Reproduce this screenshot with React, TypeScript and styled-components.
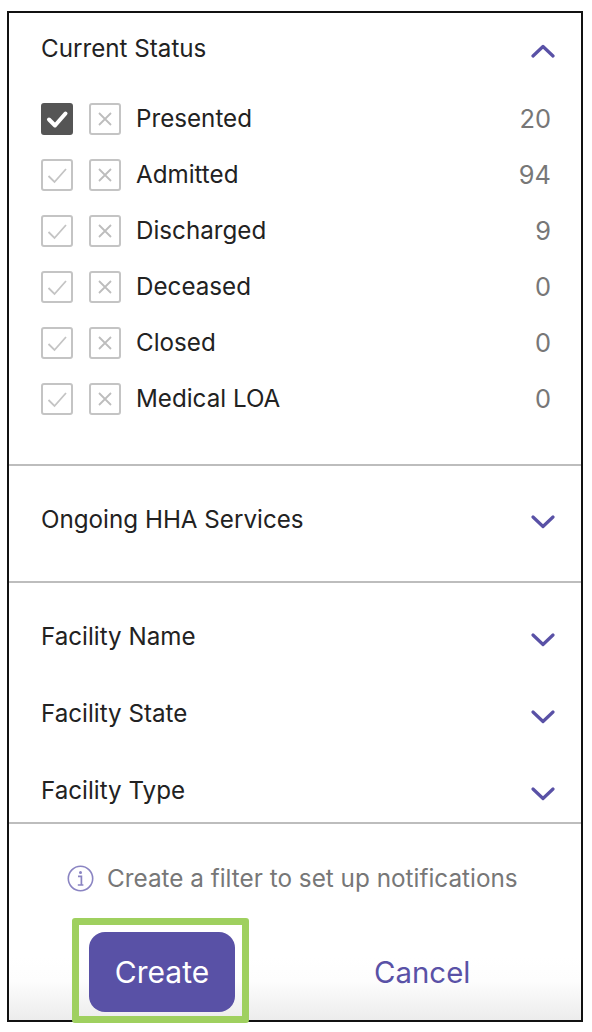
import React from "react";
import styled, { createGlobalStyle } from "styled-components";

const Global = createGlobalStyle`
  html, body { margin: 0; padding: 0; background: #fff; }
  body { font-family: Inter, "Liberation Sans", sans-serif; }
  * { box-sizing: border-box; }
`;

const Page = styled.div`
  width: 592px;
  height: 1032px;
  padding: 11px 9px 10px 7px;
  background: #fff;
`;

const Panel = styled.div`
  height: 100%;
  border: 2px solid #111;
  display: flex;
  flex-direction: column;
  background: #fff;
`;

const Section = styled.section<{ $h: number }>`
  height: ${(p) => p.$h}px;
  border-bottom: 2px solid #bdbdbd;
  flex: none;
`;

const StackedSection = styled(Section)`
  padding-top: 35px;
  display: flex;
  flex-direction: column;
  gap: 39px;
`;

const HeadRow = styled.div<{ $h: number }>`
  height: ${(p) => p.$h}px;
  padding: 0 26px 0 32px;
  display: flex;
  align-items: center;
  justify-content: space-between;
`;

const Title = styled.div`
  font-size: 24.2px;
  line-height: 28px;
  color: #222;
`;

const Rows = styled.div`
  padding: 6px 30px 0 32px;
  display: flex;
  flex-direction: column;
`;

const Row = styled.div`
  height: 56px;
  display: flex;
  align-items: center;
`;

const Box = styled.span<{ $on?: boolean }>`
  width: 32px;
  height: 32px;
  margin-right: 16px;
  flex: none;
  border-radius: 3px;
  border: 2px solid ${(p) => (p.$on ? "#555" : "#c4c4c4")};
  background: ${(p) => (p.$on ? "#555" : "#fff")};
  display: flex;
  align-items: center;
  justify-content: center;
`;

const Label = styled.span`
  flex: 1;
  margin: -2px 0 0 -1px;
  font-size: 24.2px;
  color: #222;
`;

const Count = styled.span`
  margin-top: -2px;
  font-size: 25.4px;
  color: #777;
`;

const ChevronSvg = styled.svg`
  margin-top: 4px;
  flex: none;
  ${StackedSection} & {
    margin-top: 6px;
  }
`;

const Footer = styled.div`
  flex: 1;
  display: flex;
  flex-direction: column;
  background: linear-gradient(to bottom, #fff 0, #fff 68%, #fdfdfd 80%, #ececec 100%);
`;

const Note = styled.div`
  margin: 40px 0 0 58px;
  height: 28px;
  display: flex;
  align-items: center;
  gap: 13px;
  font-size: 24.3px;
  color: #777;
`;

const Actions = styled.div`
  margin: 40px 0 0 80px;
  display: flex;
  align-items: center;
`;

const Create = styled.button`
  position: relative;
  width: 146px;
  height: 80px;
  flex: none;
  border: 0;
  border-radius: 16px;
  background: #5951a6;
  color: #fff;
  font: 400 30px Inter, "Liberation Sans", sans-serif;
  &::before {
    content: "";
    box-sizing: border-box;
    position: absolute;
    left: -17px;
    top: -14px;
    width: 177px;
    height: 105px;
    border: 7px solid #9fd05f;
    border-radius: 3px;
    pointer-events: none;
  }
`;

const Cancel = styled.button`
  margin-left: 139px;
  padding: 0;
  border: 0;
  background: transparent;
  color: #5951a6;
  font: 400 29.4px Inter, "Liberation Sans", sans-serif;
`;

const Check = ({ on }: { on?: boolean }) => (
  <svg width="24" height="24" viewBox="0 0 24 24" fill="none">
    {on ? (
      <path d="M4 12.5 L10 18.5 L20.5 6.5" stroke="#fff" strokeWidth="4" strokeLinecap="round" strokeLinejoin="round" />
    ) : (
      <path d="M3.5 13 L9.5 19 L21 6" stroke="#c4c4c4" strokeWidth="1.8" />
    )}
  </svg>
);

const Cross = () => (
  <svg width="18" height="18" viewBox="0 0 18 18" fill="none">
    <path d="M3 3 L15 15 M15 3 L3 15" stroke="#bdbdbd" strokeWidth="1.8" />
  </svg>
);

const Chevron = ({ up }: { up?: boolean }) => (
  <ChevronSvg width="24" height="14" viewBox="0 0 24 14" fill="none">
    <path d={up ? "M2 12 L12 2.5 L22 12" : "M2 2 L12 11.5 L22 2"} stroke="#5951a6" strokeWidth="3.2" strokeLinecap="round" strokeLinejoin="round" />
  </ChevronSvg>
);

const Info = () => (
  <svg width="27" height="27" viewBox="0 0 27 27" fill="none">
    <circle cx="13.5" cy="13.5" r="12.2" stroke="#8a84c2" strokeWidth="1.6" />
    <circle cx="13.5" cy="7.6" r="1.5" fill="#8a84c2" />
    <path d="M11 11.3 H14.4 V19.6 M10.8 20 H16.4" stroke="#8a84c2" strokeWidth="1.7" />
  </svg>
);

const statuses: [string, number][] = [
  ["Presented", 20],
  ["Admitted", 94],
  ["Discharged", 9],
  ["Deceased", 0],
  ["Closed", 0],
  ["Medical LOA", 0],
];

export default function App() {
  return (
    <Page>
      <Global />
      <Panel>
        <Section $h={453}>
          <HeadRow $h={72}>
            <Title>Current Status</Title>
            <Chevron up />
          </HeadRow>
          <Rows>
            {statuses.map(([name, n], i) => (
              <Row key={name}>
                <Box $on={i === 0}><Check on={i === 0} /></Box>
                <Box><Cross /></Box>
                <Label>{name}</Label>
                <Count>{n}</Count>
              </Row>
            ))}
          </Rows>
        </Section>
        <Section $h={117}>
          <HeadRow $h={107}>
            <Title>Ongoing HHA Services</Title>
            <Chevron />
          </HeadRow>
        </Section>
        <StackedSection $h={241}>
          <HeadRow $h={38}>
            <Title>Facility Name</Title>
            <Chevron />
          </HeadRow>
          <HeadRow $h={38}>
            <Title>Facility State</Title>
            <Chevron />
          </HeadRow>
          <HeadRow $h={38}>
            <Title>Facility Type</Title>
            <Chevron />
          </HeadRow>
        </StackedSection>
        <Footer>
          <Note>
            <Info />
            Create a filter to set up notifications
          </Note>
          <Actions>
            <Create>Create</Create>
            <Cancel>Cancel</Cancel>
          </Actions>
        </Footer>
      </Panel>
    </Page>
  );
}
